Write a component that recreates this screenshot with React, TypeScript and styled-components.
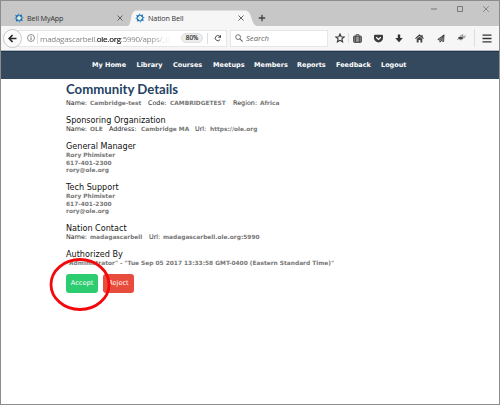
import React from 'react';
import styled, { createGlobalStyle } from 'styled-components';

const Global = createGlobalStyle`
  * { box-sizing: border-box; }
  html, body { margin: 0; padding: 0; background: #fff; overflow: hidden; }
`;

const ui = `'Open Sans', 'Noto Sans', sans-serif`;
const body = `'DejaVu Sans', sans-serif`;

const Window = styled.div`
  width: 500px;
  height: 405px;
  border: 1px solid #8c8c8c;
  background: #fff;
  display: flex;
  flex-direction: column;
  font-family: ${body};
`;

const TitleBar = styled.div`
  height: 25px;
  flex: none;
  display: flex;
  background: #c7c7c7;
`;

const Tab = styled.div<{ $width: number; $pad: number }>`
  width: ${p => p.$width}px;
  height: 16px;
  margin-top: 9px;
  padding-left: ${p => p.$pad}px;
  display: flex;
  align-items: center;
  position: relative;
  font: 7.2px/16px ${ui};
  letter-spacing: -0.12px;
  color: #333;
  white-space: nowrap;
`;

const TabShape = styled.svg`
  position: absolute;
  left: 0;
  top: 0;
`;

const TabIcon = styled.svg`
  width: 10px;
  height: 10px;
  flex: none;
  position: relative;
  margin-right: 3px;
`;

const TabTitle = styled.span`
  position: relative;
  width: 90px;
`;

const Glyph = styled.svg<{ $gap?: number; $drop?: number }>`
  flex: none;
  display: block;
  position: relative;
  margin-left: ${p => p.$gap ?? 0}px;
  margin-top: ${p => p.$drop ?? 0}px;
`;

const WindowControls = styled.div`
  display: flex;
  margin-left: auto;
  padding: 4px 9px 0 0;
  gap: 18px;
`;

const Toolbar = styled.div`
  height: 25px;
  flex: none;
  display: flex;
  align-items: center;
  background: #f6f6f6;
  border-bottom: 1px solid #b4bdc4;
`;

const BackButton = styled.div`
  width: 19px;
  height: 19px;
  margin-left: 2px;
  border: 1px solid #c8c8c8;
  border-radius: 50%;
  background: #fcfcfc;
  display: flex;
  align-items: center;
  justify-content: center;
  flex: none;
  position: relative;
  z-index: 1;
`;

const AddressBar = styled.div`
  width: 209px;
  height: 17px;
  margin-left: -4px;
  padding-left: 8px;
  border: 1px solid #e6e6e6;
  background: #fff;
  display: flex;
  align-items: center;
  font: 8px/15px ${ui};
  flex: none;
`;

const Divider = styled.i<{ $gap: number; $height?: number }>`
  width: 1px;
  height: ${p => p.$height ?? 11}px;
  margin-left: ${p => p.$gap}px;
  background: #dedede;
  flex: none;
`;

const Address = styled.span`
  width: 133px;
  margin-left: 2px;
  white-space: nowrap;
  letter-spacing: -0.27px;
  color: #858585;
  mask-image: linear-gradient(90deg, #000 108px, transparent 131px);
  b { font-weight: 400; color: #111; -webkit-text-stroke: 0.15px #111; }
`;

const Zoom = styled.span`
  width: 22px;
  height: 10px;
  margin-left: 8px;
  border: 1px solid #dedede;
  border-radius: 5px;
  background: #eee;
  font: 6.3px/8px ${ui};
  color: #222;
  -webkit-text-stroke: 0.15px #222;
  text-align: center;
`;

const SearchBar = styled.div`
  width: 98px;
  height: 17px;
  margin-left: 3px;
  padding-left: 4px;
  border: 1px solid #e6e6e6;
  background: #fff;
  display: flex;
  align-items: center;
  font: italic 7.7px/15px ${ui};
  color: #666;
  flex: none;
`;

const SearchHint = styled.span`
  margin-left: 3px;
`;

const Nav = styled.nav`
  height: 28px;
  flex: none;
  display: flex;
  padding-left: 91px;
  background: #34495e;
  border-top: 1px solid #203448;
  font: bold 6.5px/27px ${body};
  color: #fff;
`;

const NavLink = styled.a<{ $width: number }>`
  width: ${p => p.$width}px;
  white-space: nowrap;
  flex: none;
`;

const Page = styled.main`
  padding-left: 65px;
  display: flex;
  flex-direction: column;
`;

const Title = styled.h1`
  margin: 3px 0 2px;
  font: bold 13.2px/15px Lato, sans-serif;
  color: #1f4265;
`;

const Section = styled.section<{ $height: number }>`
  height: ${p => p.$height}px;
`;

const Heading = styled.h2`
  margin: 0;
  font: 8.1px/10px ${body};
  color: #111;
  white-space: nowrap;
`;

const Line = styled.div<{ $height?: number }>`
  display: flex;
  height: ${p => p.$height ?? 8}px;
  font: 6.4px/8px ${body};
  white-space: nowrap;
`;

const Label = styled.span<{ $width: number }>`
  width: ${p => p.$width}px;
  color: #222;
  flex: none;
`;

const Value = styled.span<{ $width?: number }>`
  width: ${p => (p.$width ? `${p.$width}px` : 'auto')};
  font-weight: bold;
  font-size: 5.87px;
  color: #777;
  flex: none;
`;

const Actions = styled.div`
  display: flex;
  gap: 5px;
  position: relative;
`;

const Button = styled.button<{ $color: string; $width: number }>`
  width: ${p => p.$width}px;
  height: 19px;
  padding: 0;
  border: 0;
  border-radius: 3px;
  background: ${p => p.$color};
  color: #fff;
  font: 6.6px/19px ${body};
`;

const Highlight = styled.svg`
  position: absolute;
  left: -18px;
  top: -18px;
  pointer-events: none;
`;

const BellLogo = () => (
  <TabIcon viewBox="0 0 10 10">
    {[0, 45, 90, 135, 180, 225, 270, 315].map(a => (
      <path
        key={a}
        d="M3.4 2.9 4.6.1 5.4 1.7 7.2 1.9 5.6 3.1Z"
        fill={a % 90 ? '#1f62a5' : '#3a9fd6'}
        transform={`rotate(${a} 5 5)`}
      />
    ))}
    <circle cx="5" cy="5" r="1.5" fill="#e3ead2" />
  </TabIcon>
);

const CloseTab = () => (
  <Glyph width="6" height="6" viewBox="0 0 6 6">
    <path d="M.5.5 5.5 5.5M5.5.5.5 5.5" stroke="#555" strokeWidth=".9" />
  </Glyph>
);

const fields = (items: [string, string, number, number?][]) => (
  <Line>
    {items.map(([label, value, lw, vw]) => (
      <React.Fragment key={label}>
        <Label $width={lw}>{label}</Label>
        <Value $width={vw}>{value}</Value>
      </React.Fragment>
    ))}
  </Line>
);

const Contact = ({ title }: { title: string }) => (
  <Section $height={41}>
    <Heading>{title}</Heading>
    {['Rory Phimister', '617-401-2300', 'rory@ole.org'].map(t => (
      <Line key={t} $height={7.6}><Value>{t}</Value></Line>
    ))}
  </Section>
);

const links: [string, number][] = [
  ['My Home', 44.5], ['Library', 36.5], ['Courses', 40], ['Meetups', 41],
  ['Members', 43], ['Reports', 39], ['Feedback', 45], ['Logout', 30],
];

export default function App() {
  return (
    <Window>
      <Global />
      <TitleBar>
        <Tab $width={127} $pad={13}>
          <BellLogo />
          <TabTitle>Bell MyApp</TabTitle>
          <CloseTab />
        </Tab>
        <Tab $width={129} $pad={7}>
          <TabShape width="129" height="16" viewBox="0 0 129 16">
            <path d="M0 16C4 14 2 1 8 .5H117C125 1 122 14 129 16Z" fill="#f6f6f6" />
          </TabShape>
          <BellLogo />
          <TabTitle>Nation Bell</TabTitle>
          <CloseTab />
        </Tab>
        <Glyph $gap={1} $drop={13} width="8" height="8" viewBox="0 0 8 8">
          <path d="M4 .8V7.2M.8 4H7.2" stroke="#444" strokeWidth="1.3" />
        </Glyph>
        <WindowControls>
          <svg width="8" height="8" viewBox="0 0 8 8"><path d="M1 4H7" stroke="#777" /></svg>
          <svg width="8" height="8" viewBox="0 0 8 8"><path d="M1.5 1.5H6.5V6.5H1.5Z" fill="none" stroke="#777" /></svg>
          <svg width="8" height="8" viewBox="0 0 8 8"><path d="M1.2 1.2 6.8 6.8M6.8 1.2 1.2 6.8" stroke="#777" strokeWidth=".8" /></svg>
        </WindowControls>
      </TitleBar>
      <Toolbar>
        <BackButton>
          <svg width="9" height="9" viewBox="0 0 9 9">
            <path d="M8.5 4.5H1.5M4.6 1 1.2 4.5 4.6 8" fill="none" stroke="#2a2a2a" strokeWidth="1.7" />
          </svg>
        </BackButton>
        <AddressBar>
          <svg width="8" height="8" viewBox="0 0 8 8">
            <circle cx="4" cy="4" r="3.5" fill="none" stroke="#777" strokeWidth=".8" />
            <path d="M4 3.4V6.2M4 1.9V2.8" stroke="#666" strokeWidth=".9" />
          </svg>
          <Divider $gap={2} />
          <Address>madagascarbell.<b>ole.org</b>:5990/apps/_d</Address>
          <Zoom>80%</Zoom>
          <Divider $gap={4} />
          <Glyph $gap={6} width="8" height="8" viewBox="0 0 8 8">
            <path d="M5.6 2.2A2.6 2.6 0 1 0 6.2 5.4" fill="none" stroke="#444" strokeWidth="1" />
            <path d="M4 3.7H7V.7Z" fill="#444" />
          </Glyph>
        </AddressBar>
        <SearchBar>
          <svg width="8" height="8" viewBox="0 0 8 8">
            <circle cx="3.1" cy="3.1" r="2.4" fill="none" stroke="#666" strokeWidth=".9" />
            <path d="M4.9 4.9 7.6 7.6" stroke="#666" strokeWidth="1.1" />
          </svg>
          <SearchHint>Search</SearchHint>
        </SearchBar>
        <Glyph $gap={7} width="10" height="10" viewBox="0 0 10 10">
          <path d="M5 1 6.2 3.7 9.1 4 6.9 5.9 7.6 8.8 5 7.3 2.4 8.8 3.1 5.9.9 4 3.8 3.7Z" fill="none" stroke="#333" strokeWidth="1.1" />
        </Glyph>
        <Divider $gap={3} $height={10} />
        <Glyph $gap={4} width="9" height="9" viewBox="0 0 9 9">
          <path d="M3 2V.7H6V2" fill="none" stroke="#444" strokeWidth=".9" />
          <rect x=".5" y="2" width="8" height="6.5" rx="1" fill="#777" stroke="#444" strokeWidth=".8" />
          <path d="M2.5 2V8.5M6.5 2V8.5" stroke="#444" strokeWidth=".7" />
          <path d="M3.4 3.8H5.6M3.4 5.2H5.6M3.4 6.6H5.6" stroke="#ccc" strokeWidth=".6" />
        </Glyph>
        <Glyph $gap={12} width="9" height="9" viewBox="0 0 9 9">
          <path d="M1 .8H8Q9 .8 9 1.8V4A4.5 4.4 0 0 1 0 4V1.8Q0 .8 1 .8Z" fill="#3b3b3b" />
          <path d="M2.2 3.2 4.5 5.4 6.8 3.2" fill="none" stroke="#fff" strokeWidth="1.2" />
        </Glyph>
        <Glyph $gap={12} width="8" height="9" viewBox="0 0 8 9">
          <path d="M2.8.5H5.2V4H7.8L4 8.3.2 4H2.8Z" fill="#333" />
        </Glyph>
        <Glyph $gap={12} width="9" height="9" viewBox="0 0 9 9">
          <path d="M.5 4.7 4.5 1 8.5 4.7M7 1V3" fill="none" stroke="#333" strokeWidth="1.1" />
          <path d="M1.7 5 4.5 2.5 7.3 5V8.4H5.4V6H3.6V8.4H1.7Z" fill="#444" />
        </Glyph>
        <Glyph $gap={13} width="8" height="9" viewBox="0 0 8 9">
          <path d="M7 .9.8 5.4 2.8 6.2 7 .9ZM7 .9 6.6 7.6 4.1 6.6ZM3 6.4V8.2L4.1 6.8" fill="#999" stroke="#333" strokeWidth=".8" />
        </Glyph>
        <Glyph $gap={12} $drop={-2} width="10" height="8" viewBox="0 0 10 8">
          <ellipse cx="3.7" cy="5" rx="2.6" ry="1.5" fill="#444" />
          <path d="M3 3 6 1.5 5.3 4 9 2.8M5 5 8 4.5M1.5 5.5.3 7M4 6 3.8 7.5" fill="none" stroke="#888" strokeWidth=".8" />
        </Glyph>
        <Divider $gap={7} $height={18} />
        <Glyph $gap={7} width="10" height="9" viewBox="0 0 10 9">
          <path d="M.5 1.2H9.5M.5 4.5H9.5M.5 7.8H9.5" stroke="#333" strokeWidth="1.3" />
        </Glyph>
      </Toolbar>
      <Nav>
        {links.map(([t, w]) => <NavLink key={t} $width={w}>{t}</NavLink>)}
      </Nav>
      <Page>
        <Title>Community Details</Title>
        <Section $height={16}>
          {fields([['Name:', 'Cambridge-test', 24, 58], ['Code:', 'CAMBRIDGETEST', 22, 63], ['Region:', 'Africa', 27]])}
        </Section>
        <Section $height={26}>
          <Heading>Sponsoring Organization</Heading>
          {fields([['Name:', 'OLE', 24, 19], ['Address:', 'Cambridge MA', 32, 54], ['Url:', 'https://ole.org', 15]])}
        </Section>
        <Contact title="General Manager" />
        <Contact title="Tech Support" />
        <Section $height={26}>
          <Heading>Nation Contact</Heading>
          {fields([['Name:', 'madagascarbell', 24, 59], ['Url:', 'madagascarbell.ole.org:5990', 14]])}
        </Section>
        <Section $height={25}>
          <Heading>Authorized By</Heading>
          <Line><Value>"Administrator" - "Tue Sep 05 2017 13:33:58 GMT-0400 (Eastern Standard Time)"</Value></Line>
        </Section>
        <Actions>
          <Button $color="#2ecc71" $width={32}>Accept</Button>
          <Button $color="#e74c3c" $width={31}>Reject</Button>
          <Highlight width="64" height="58" viewBox="0 0 64 58">
            <ellipse cx="32" cy="28.5" rx="29" ry="25" fill="none" stroke="#f5080c" strokeWidth="2.8" />
          </Highlight>
        </Actions>
      </Page>
    </Window>
  );
}
